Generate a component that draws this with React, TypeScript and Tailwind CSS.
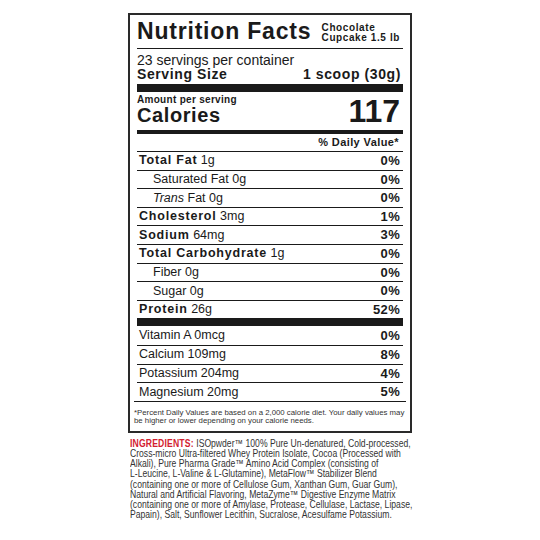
const rows: { label: string; amount: string; dv: string; bold?: boolean; indent?: boolean; italic?: string }[] = [
  { label: "Total Fat", amount: "1g", dv: "0%", bold: true },
  { label: "Saturated Fat", amount: "0g", dv: "0%", indent: true },
  { label: "Fat", amount: "0g", dv: "0%", indent: true, italic: "Trans" },
  { label: "Cholesterol", amount: "3mg", dv: "1%", bold: true },
  { label: "Sodium", amount: "64mg", dv: "3%", bold: true },
  { label: "Total Carbohydrate", amount: "1g", dv: "0%", bold: true },
  { label: "Fiber", amount: "0g", dv: "0%", indent: true },
  { label: "Sugar", amount: "0g", dv: "0%", indent: true },
  { label: "Protein", amount: "26g", dv: "52%", bold: true },
];

const minerals = [
  { label: "Vitamin A 0mcg", dv: "0%" },
  { label: "Calcium 109mg", dv: "8%" },
  { label: "Potassium 204mg", dv: "4%" },
  { label: "Magnesium 20mg", dv: "5%" },
];

const ingredients = [
  "ISOpwder™ 100% Pure Un-denatured, Cold-processed,",
  "Cross-micro Ultra-filtered Whey Protein Isolate, Cocoa (Processed with",
  "Alkali), Pure Pharma Grade™ Amino Acid Complex (consisting of",
  "L-Leucine, L-Valine & L-Glutamine), MetaFlow™ Stabilizer Blend",
  "(containing one or more of Cellulose Gum, Xanthan Gum, Guar Gum),",
  "Natural and Artificial Flavoring, MetaZyme™ Digestive Enzyme Matrix",
  "(containing one or more of Amylase, Protease, Cellulase, Lactase, Lipase,",
  "Papain), Salt, Sunflower Lecithin, Sucralose, Acesulfame Potassium.",
];

export default function App() {
  return (
    <div className="w-[540px] h-[540px] bg-white pt-[13px] text-[#1a1a1a] font-['Liberation_Sans',Arial,sans-serif]">
      {/* label */}
      <div className="mx-auto w-[284px] border-2 border-[#2a2a2a] px-[7px]">
        <div className="flex items-start justify-between h-[34px] pt-[5px] border-b border-[#1a1a1a]">
          <h1 className="text-[23px] leading-[23px] font-bold tracking-[0.8px] whitespace-nowrap">Nutrition Facts</h1>
          <div className="text-[10px] leading-[10px] font-bold tracking-[0.6px] pt-[3px] pr-[3px] whitespace-nowrap">
            <div>Chocolate</div>
            <div>Cupcake 1.5 lb</div>
          </div>
        </div>

        <div className="h-[35px] pt-[4px] text-[14px] leading-[14px]">
          <div>23 servings per container</div>
          <div className="flex justify-between font-bold pr-[2px] tracking-[0.6px]">
            <span>Serving Size</span>
            <span>1 scoop (30g)</span>
          </div>
        </div>
        <div className="h-[8px] bg-[#1a1a1a]" />

        <div className="h-[38px] flex justify-between items-end pb-[4px]">
          <div className="font-bold">
            <div className="text-[10px] leading-[11px] tracking-[0.3px]">Amount per serving</div>
            <div className="text-[20px] leading-[21px] tracking-[0.6px]">Calories</div>
          </div>
          <div className="text-[32px] leading-[30px] font-bold pr-[3px]">117</div>
        </div>
        <div className="h-[4px] bg-[#1a1a1a]" />

        <div className="h-[17px] flex items-center justify-end pr-[4px] text-[11px] font-bold tracking-[0.4px]">% Daily Value*</div>

        {rows.map((r) => (
          <div key={r.label} className="h-[18.6px] border-t border-[#1a1a1a] flex items-center justify-between text-[12.5px] pr-[3px]">
            <span className={r.indent ? "pl-[16px]" : "pl-[2px]"}>
              {r.italic && <i>{r.italic} </i>}
              {r.bold ? <b className="tracking-[0.8px]">{r.label}</b> : r.label} {r.amount}
            </span>
            <b className="text-[13px] tracking-[0.3px]">{r.dv}</b>
          </div>
        ))}
        <div className="h-[8px] bg-[#1a1a1a]" />

        {minerals.map((m, i) => (
          <div key={m.label} className={"h-[18.6px] flex items-center justify-between text-[12.5px] pr-[3px] " + (i > 0 ? "border-t border-[#1a1a1a]" : "")}>
            <span className="pl-[2px]">{m.label}</span>
            <b className="text-[13px] tracking-[0.3px]">{m.dv}</b>
          </div>
        ))}

        <div className="border-t border-[#1a1a1a] -mx-[3px] pt-[7px] pb-[6px] text-[7.8px] leading-[8px] text-[#333] whitespace-nowrap">
          <div>*Percent Daily Values are based on a 2,000 calorie diet. Your daily values may</div>
          <div>be higher or lower depending on your calorie needs.</div>
        </div>
      </div>

      {/* ingredients */}
      <div className="ml-[130px] mt-[5px] origin-left scale-x-[0.82] text-[10.5px] leading-[10.2px] text-[#333] whitespace-nowrap">
        {ingredients.map((line, i) => (
          <div key={i}>
            {i === 0 && <b className="text-[#d3202f] tracking-[0.2px]">INGREDIENTS: </b>}
            {line}
          </div>
        ))}
      </div>
    </div>
  );
}
